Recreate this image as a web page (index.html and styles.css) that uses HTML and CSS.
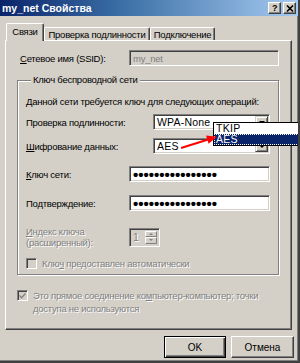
FILE: index.html
```html
<!DOCTYPE html>
<html lang="ru">
<head>
    <meta charset="UTF-8">
    <title>my_net Свойства</title>
    <link rel="stylesheet" href="styles.css">
</head>
<body>
    <div class="window">
        <div class="titlebar">
            <span class="title">my_net Свойства</span>
            <div class="caption-buttons">
                <span class="cap-btn">?</span>
                <span class="cap-btn">
                    <svg width="8" height="7" viewBox="0 0 8 7"><path d="M1 0.5 L7 6.5 M7 0.5 L1 6.5" stroke="#000" stroke-width="1.6"/></svg>
                </span>
            </div>
        </div>

        <div class="tabs">
            <div class="tab active">Связи</div>
            <div class="tab tab-auth">Проверка подлинности</div>
            <div class="tab tab-conn">Подключение</div>
        </div>

        <div class="panel">
            <div class="row ssid-row">
                <label class="ssid-label"><u>С</u>етевое имя (SSID):</label>
                <div class="field disabled">my_net</div>
            </div>

            <div class="group">
                <div class="group-title">Ключ беспроводной сети</div>
                <p class="note">Данной сети требуется ключ для следующих операций:</p>

                <div class="row auth-row">
                    <label>Проверка по<u>д</u>линности:</label>
                    <div class="combo"><span>WPA-None</span><i class="combo-btn"><b class="tri"></b></i></div>
                </div>
                <div class="row enc-row">
                    <label><u>Ш</u>ифрование данных:</label>
                    <div class="combo"><span>AES</span><i class="combo-btn"><b class="tri"></b></i></div>
                </div>
                <div class="row key-row">
                    <label><u>К</u>люч сети:</label>
                    <div class="field password">••••••••••••••••</div>
                </div>
                <div class="row confirm-row">
                    <label>По<u>д</u>тверждение:</label>
                    <div class="field password">••••••••••••••••</div>
                </div>
                <div class="row index-row">
                    <label class="muted"><u>И</u>ндекс ключа<br>(расширенный):</label>
                    <div class="spinner">
                        <span class="muted">1</span>
                        <div class="spin-btns">
                            <i class="spin-btn"><b class="tri up"></b></i>
                            <i class="spin-btn"><b class="tri"></b></i>
                        </div>
                    </div>
                    <div class="spacer"></div>
                </div>
                <div class="check-row auto-row">
                    <span class="checkbox"></span>
                    <span class="muted">Клю<u>ч</u> предоставлен автоматически</span>
                </div>
            </div>

            <div class="check-row adhoc-row">
                <span class="checkbox">
                    <svg width="9" height="9" viewBox="0 0 9 9"><path d="M1.5 3.5 L3.5 5.8 L7.5 1.5 L7.5 3.6 L3.5 7.8 L1.5 5.6 Z" fill="#808080"/></svg>
                </span>
                <span class="muted">Это прямое соединение ко<u>м</u>пьютер-компьютер; точки<br>доступа не используются</span>
            </div>
        </div>

        <div class="buttons">
            <button class="btn default">OK</button>
            <button class="btn cancel">Отмена</button>
        </div>

        <div class="dropdown">
            <div class="option">TKIP</div>
            <div class="option selected">AES</div>
        </div>

        <svg class="pointer" width="44" height="20" viewBox="0 0 44 20">
            <line x1="5" y1="16" x2="33" y2="7.3" stroke="#f00" stroke-width="2"/>
            <polygon points="41,4.8 32.6,11.8 30,3.6" fill="#f00"/>
        </svg>
    </div>
</body>
</html>
```

FILE: styles.css
```css
body { margin: 0; font-family: "Liberation Sans", Arial, sans-serif; font-size: 9.5px; letter-spacing: -0.25px; color: #000; white-space: nowrap; }
u { text-decoration: underline; text-underline-offset: 1px; }

.window { position: relative; width: 300px; height: 363px; box-sizing: border-box; background: #d4d0c8; border-right: 2px solid #404040; border-bottom: 2px solid #404040; box-shadow: inset -1px -1px #808080; overflow: hidden; }

.titlebar { height: 16px; display: flex; align-items: center; justify-content: space-between; padding: 0 2px 0 2px; background: linear-gradient(to right, #0a246a, #3a6ea5 40%, #a6caf0); color: #fff; }
.title { font-weight: bold; font-size: 10.5px; letter-spacing: 0; }
.caption-buttons { display: flex; gap: 2px; }
.cap-btn { width: 13px; height: 12px; box-sizing: border-box; display: flex; align-items: center; justify-content: center; background: #d4d0c8; color: #000; font-weight: bold; font-size: 9px; border: 1px solid; border-color: #fff #404040 #404040 #fff; box-shadow: inset -1px -1px #808080; }

.tabs { position: relative; z-index: 1; display: flex; align-items: flex-end; height: 17px; padding: 7px 0 0 6px; }
.tab { height: 13px; box-sizing: border-box; display: flex; align-items: center; justify-content: center; background: #d4d0c8; border: 1px solid; border-bottom: none; border-color: #fff #404040 #404040 #fff; border-radius: 2px 2px 0 0; box-shadow: inset -1px 0 #808080; }
.tab.active { width: 38px; height: 18px; margin-bottom: -1px; padding-bottom: 2px; }
.tab-auth { width: 106px; }
.tab-conn { width: 65px; }

.panel { width: 287px; height: 290px; box-sizing: border-box; margin-left: 5px; padding: 9px 12px 0 11px; border: 1px solid; border-color: #fff #404040 #404040 #fff; box-shadow: inset -1px -1px #808080; }

.row { display: flex; align-items: center; }
.row label { flex: 1; }
.ssid-row { height: 16px; }
.ssid-label { padding-left: 3px; }

.field { height: 16px; box-sizing: border-box; display: flex; align-items: center; padding-left: 3px; background: #fff; border: 1px solid; border-color: #808080 #fff #fff #808080; box-shadow: inset 1px 1px #404040, inset -1px -1px #d4d0c8; }
.ssid-row .field { width: 150px; }
.field.disabled { background: #d4d0c8; color: #808080; }
.field.password { width: 141px; font-weight: bold; font-size: 15px; letter-spacing: 0; line-height: 1; overflow: hidden; }

.group { height: 195px; box-sizing: border-box; margin-top: 14px; padding: 0 8px; border: 1px solid #808080; box-shadow: inset 1px 1px #fff, 1px 1px #fff; }
.group-title { width: max-content; margin: -7px 0 0 5px; padding: 0 2px; line-height: 12px; background: #d4d0c8; }
.note { margin: 10px 0 0; line-height: 12px; }

.auth-row { margin-top: 6px; }
.enc-row { margin-top: 8px; }
.key-row { margin-top: 12px; }
.confirm-row { margin-top: 13px; }
.index-row { margin-top: 15px; }
.index-row label { flex: none; width: 103px; line-height: 11px; }
.spacer { flex: 1; }

.combo { width: 117px; height: 16px; box-sizing: border-box; display: flex; align-items: center; justify-content: space-between; padding: 0 1px 0 3px; background: #fff; font-size: 10.5px; letter-spacing: 0.2px; border: 1px solid; border-color: #808080 #fff #fff #808080; box-shadow: inset 1px 1px #404040, inset -1px -1px #d4d0c8; }
.combo-btn { width: 13px; height: 12px; box-sizing: border-box; display: flex; align-items: center; justify-content: center; background: #d4d0c8; border: 1px solid; border-color: #d4d0c8 #404040 #404040 #d4d0c8; box-shadow: inset 1px 1px #fff, inset -1px -1px #808080; }
.tri { width: 0; height: 0; border-left: 3px solid transparent; border-right: 3px solid transparent; border-top: 3px solid #000; }
.tri.up { border-top: none; border-bottom: 3px solid #808080; }
.spin-btn .tri { border-top-color: #808080; border-left-width: 2px; border-right-width: 2px; border-top-width: 2px; }
.spin-btn .tri.up { border-bottom-width: 2px; }

.spinner { width: 31px; height: 19px; box-sizing: border-box; display: flex; justify-content: space-between; padding: 2px 2px 2px 3px; background: #d4d0c8; font-size: 10.5px; border: 1px solid; border-color: #808080 #fff #fff #808080; box-shadow: inset 1px 1px #404040, inset -1px -1px #d4d0c8; }
.spinner .muted { line-height: 13px; }
.spin-btns { display: flex; flex-direction: column; }
.spin-btn { flex: 1; width: 12px; box-sizing: border-box; display: flex; align-items: center; justify-content: center; background: #d4d0c8; border: 1px solid; border-color: #fff #808080 #808080 #fff; }

.muted { color: #808080; text-shadow: 1px 1px #fff; }

.check-row { display: flex; align-items: flex-start; gap: 5px; }
.checkbox { flex: none; width: 11px; height: 11px; box-sizing: border-box; display: flex; align-items: center; justify-content: center; background: #d4d0c8; border: 1px solid; border-color: #808080 #fff #fff #808080; box-shadow: inset 1px 1px #404040, inset -1px -1px #d4d0c8; }
.auto-row { margin-top: 10px; line-height: 11px; }
.adhoc-row { margin-top: 14px; line-height: 13px; }
.adhoc-row .checkbox { margin-top: 1px; }

.buttons { display: flex; justify-content: flex-end; gap: 5px; padding: 6px 4px 0 0; }
.btn { width: 62px; height: 22px; box-sizing: border-box; padding: 0; font-family: inherit; font-size: 10px; color: #000; background: #d4d0c8; border: 1px solid; border-color: #fff #404040 #404040 #fff; box-shadow: inset -1px -1px #808080; }
.btn.default { border-color: #000; box-shadow: inset 1px 1px #fff, inset -1px -1px #404040, inset -2px -2px #808080; }
.btn.cancel { width: 63px; }

.dropdown { position: absolute; left: 213px; top: 122px; width: 87px; box-sizing: border-box; background: #fff; border: 1px solid #000; font-size: 10.5px; letter-spacing: 0.3px; }
.option { height: 11px; line-height: 11px; padding-left: 2px; }
.option.selected { background: #0a246a; color: #fff; outline: 1px dotted #fff; outline-offset: -1px; }

.pointer { position: absolute; left: 176px; top: 132px; }
```
